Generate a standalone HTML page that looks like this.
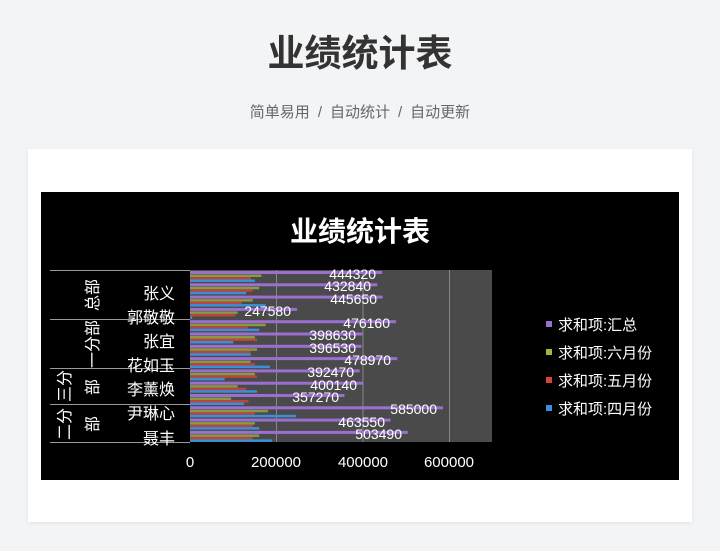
<!DOCTYPE html>
<html><head><meta charset="utf-8"><style>
body{margin:0;width:720px;height:551px;background:#f3f4f6;font-family:"Liberation Sans","Noto Sans CJK SC",sans-serif;position:relative;overflow:hidden}
h1{position:absolute;top:30px;left:0;width:720px;text-align:center;margin:0;font-size:37px;font-weight:bold;color:#333;line-height:48px}
.sub{position:absolute;top:101px;left:0;width:720px;text-align:center;font-size:15px;color:#666}
.sub span{margin:0 8px}
.card{position:absolute;left:28px;top:149px;width:664px;height:373px;background:#fff;box-shadow:0 1px 4px rgba(0,0,0,.08)}
svg{position:absolute;left:0;top:0}
</style></head><body>
<h1>业绩统计表</h1>
<div class="sub">简单易用<span>/</span>自动统计<span>/</span>自动更新</div>
<div class="card"></div>
<svg width="720" height="551" font-family="Liberation Sans, Noto Sans CJK SC, sans-serif">
<rect x="41" y="192" width="638" height="288" fill="#000"/>
<text x="360" y="241" fill="#fff" font-size="28" font-weight="bold" text-anchor="middle">业绩统计表</text>
<rect x="190" y="270" width="302" height="172" fill="#4a4a4a"/>
<g stroke="#888" stroke-width="1"><line x1="276.5" y1="270" x2="276.5" y2="442"/><line x1="363" y1="270" x2="363" y2="442"/><line x1="449.5" y1="270" x2="449.5" y2="442"/></g>
<g stroke="#999" stroke-width="1"><line x1="50" y1="270.5" x2="190" y2="270.5"/><line x1="50" y1="319.5" x2="190" y2="319.5"/><line x1="50" y1="368.5" x2="190" y2="368.5"/><line x1="50" y1="404.5" x2="190" y2="404.5"/><line x1="50" y1="442.5" x2="190" y2="442.5"/></g>
<g>
<rect x="190" y="271" width="192.2" height="3" fill="#9b6fd0"/><rect x="190" y="274.5" width="71.4" height="2.5" fill="#8a9a40"/><rect x="190" y="277" width="60.6" height="2.5" fill="#b8463f"/><rect x="190" y="279.5" width="64.9" height="2.5" fill="#3a8fd8"/>
<rect x="190" y="283.3" width="187.2" height="3" fill="#9b6fd0"/><rect x="190" y="286.8" width="69.2" height="2.5" fill="#8a9a40"/><rect x="190" y="289.3" width="62.7" height="2.5" fill="#b8463f"/><rect x="190" y="291.8" width="56.2" height="2.5" fill="#3a8fd8"/>
<rect x="190" y="295.6" width="192.7" height="3" fill="#9b6fd0"/><rect x="190" y="299.1" width="62.7" height="2.5" fill="#8a9a40"/><rect x="190" y="301.6" width="51.9" height="2.5" fill="#b8463f"/><rect x="190" y="304.1" width="75.7" height="2.5" fill="#3a8fd8"/>
<rect x="190" y="307.9" width="107.1" height="3" fill="#9b6fd0"/><rect x="190" y="311.4" width="47.6" height="2.5" fill="#8a9a40"/><rect x="190" y="313.9" width="45.4" height="2.5" fill="#b8463f"/><rect x="190" y="316.4" width="2.2" height="2.5" fill="#3a8fd8"/>
<rect x="190" y="320.2" width="205.9" height="3" fill="#9b6fd0"/><rect x="190" y="323.7" width="75.7" height="2.5" fill="#8a9a40"/><rect x="190" y="326.2" width="58.4" height="2.5" fill="#b8463f"/><rect x="190" y="328.7" width="69.2" height="2.5" fill="#3a8fd8"/>
<rect x="190" y="332.5" width="172.4" height="3" fill="#9b6fd0"/><rect x="190" y="336" width="64.9" height="2.5" fill="#8a9a40"/><rect x="190" y="338.5" width="67" height="2.5" fill="#b8463f"/><rect x="190" y="341" width="43.3" height="2.5" fill="#3a8fd8"/>
<rect x="190" y="344.8" width="171.5" height="3" fill="#9b6fd0"/><rect x="190" y="348.3" width="67" height="2.5" fill="#8a9a40"/><rect x="190" y="350.8" width="60.6" height="2.5" fill="#b8463f"/><rect x="190" y="353.3" width="60.6" height="2.5" fill="#3a8fd8"/>
<rect x="190" y="357.1" width="207.2" height="3" fill="#9b6fd0"/><rect x="190" y="360.6" width="60.6" height="2.5" fill="#8a9a40"/><rect x="190" y="363.1" width="64.9" height="2.5" fill="#b8463f"/><rect x="190" y="365.6" width="80" height="2.5" fill="#3a8fd8"/>
<rect x="190" y="369.4" width="169.7" height="3" fill="#9b6fd0"/><rect x="190" y="372.9" width="64.9" height="2.5" fill="#8a9a40"/><rect x="190" y="375.4" width="67" height="2.5" fill="#b8463f"/><rect x="190" y="377.9" width="34.6" height="2.5" fill="#3a8fd8"/>
<rect x="190" y="381.7" width="173.1" height="3" fill="#9b6fd0"/><rect x="190" y="385.2" width="47.6" height="2.5" fill="#8a9a40"/><rect x="190" y="387.7" width="56.2" height="2.5" fill="#b8463f"/><rect x="190" y="390.2" width="67" height="2.5" fill="#3a8fd8"/>
<rect x="190" y="394" width="154.5" height="3" fill="#9b6fd0"/><rect x="190" y="397.5" width="41.1" height="2.5" fill="#8a9a40"/><rect x="190" y="400" width="58.4" height="2.5" fill="#b8463f"/><rect x="190" y="402.5" width="54.1" height="2.5" fill="#3a8fd8"/>
<rect x="190" y="406.3" width="253" height="3" fill="#9b6fd0"/><rect x="190" y="409.8" width="77.9" height="2.5" fill="#8a9a40"/><rect x="190" y="412.3" width="64.9" height="2.5" fill="#b8463f"/><rect x="190" y="414.8" width="106" height="2.5" fill="#3a8fd8"/>
<rect x="190" y="418.6" width="200.5" height="3" fill="#9b6fd0"/><rect x="190" y="422.1" width="64.9" height="2.5" fill="#8a9a40"/><rect x="190" y="424.6" width="62.7" height="2.5" fill="#b8463f"/><rect x="190" y="427.1" width="69.2" height="2.5" fill="#3a8fd8"/>
<rect x="190" y="430.9" width="217.8" height="3" fill="#9b6fd0"/><rect x="190" y="434.4" width="69.2" height="2.5" fill="#8a9a40"/><rect x="190" y="436.9" width="62.7" height="2.5" fill="#b8463f"/><rect x="190" y="439.4" width="82.2" height="2.5" fill="#3a8fd8"/>
</g>
<g fill="#fff" font-size="14" text-anchor="end">
<text x="376" y="279">444320</text><text x="371" y="291">432840</text><text x="377" y="304">445650</text><text x="291" y="316">247580</text>
<text x="390" y="328">476160</text><text x="356" y="340">398630</text><text x="356" y="353">396530</text><text x="391" y="365">478970</text>
<text x="354" y="377">392470</text><text x="357" y="390">400140</text><text x="339" y="402">357270</text><text x="437" y="414">585000</text>
<text x="385" y="427">463550</text><text x="402" y="439">503490</text>
</g>
<g fill="#fff" font-size="16" text-anchor="end">
<text x="175" y="299">张义</text><text x="175" y="323">郭敬敬</text><text x="175" y="347">张宜</text><text x="175" y="371">花如玉</text><text x="175" y="395">李薰焕</text><text x="175" y="419">尹琳心</text><text x="175" y="444">聂丰</text>
</g>
<g fill="#fff" font-size="16">
<text transform="translate(98,295) rotate(-90)" text-anchor="middle">总部</text>
<text transform="translate(98,344) rotate(-90)" text-anchor="middle">一分部</text>
<text transform="translate(70,386) rotate(-90)" text-anchor="middle">三分</text>
<text transform="translate(98,387) rotate(-90)" text-anchor="middle">部</text>
<text transform="translate(70,424) rotate(-90)" text-anchor="middle">二分</text>
<text transform="translate(98,424) rotate(-90)" text-anchor="middle">部</text>
</g>
<g fill="#fff" font-size="15" text-anchor="middle">
<text x="190" y="467">0</text><text x="276" y="467">200000</text><text x="363" y="467">400000</text><text x="449" y="467">600000</text>
</g>
<g font-size="15" fill="#fff">
<rect x="546" y="321" width="6" height="6" fill="#9b6fd0"/><text x="558" y="330">求和项:汇总</text>
<rect x="546" y="349" width="6" height="6" fill="#9bbb39"/><text x="558" y="358">求和项:六月份</text>
<rect x="546" y="377" width="6" height="6" fill="#d9413c"/><text x="558" y="386">求和项:五月份</text>
<rect x="546" y="405" width="6" height="6" fill="#3a8fd8"/><text x="558" y="414">求和项:四月份</text>
</g>
</svg>
</body></html>
